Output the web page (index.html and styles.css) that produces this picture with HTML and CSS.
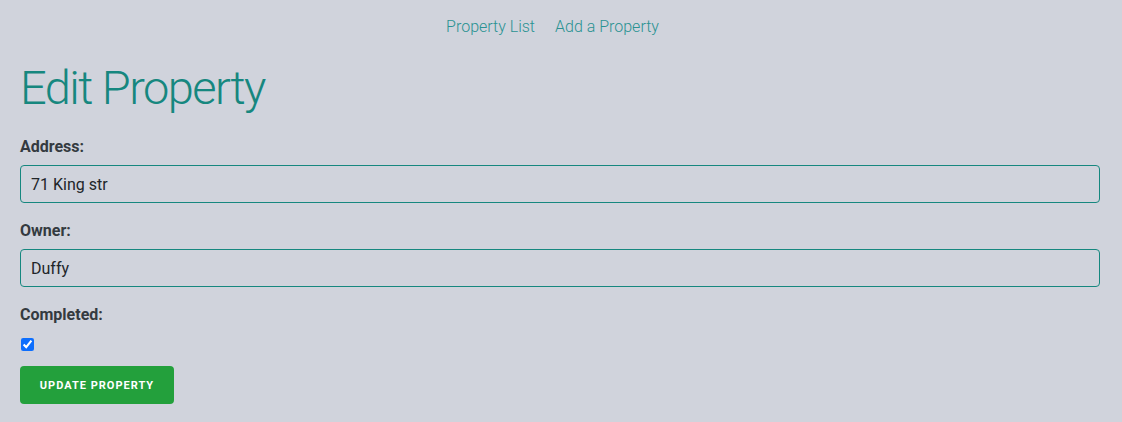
FILE: index.html
```html
<!DOCTYPE html>
<html>
<head>
<meta charset="utf-8">
<link rel="stylesheet" href="styles.css">
</head>
<body>
<nav class="nav">
  <a href="#" class="nav-link">Property List</a>
  <a href="#" class="nav-link">Add a Property</a>
</nav>
<main class="page">
  <h1 class="title">Edit Property</h1>
  <form class="form">
    <div class="field">
      <label class="label">Address:</label>
      <input class="input" type="text" value="71 King str">
    </div>
    <div class="field">
      <label class="label">Owner:</label>
      <input class="input" type="text" value="Duffy">
    </div>
    <div class="field field-check">
      <label class="label">Completed:</label>
      <input class="check" type="checkbox" checked>
    </div>
    <button class="btn" type="button">Update Property</button>
  </form>
</main>
</body>
</html>
```
FILE: styles.css
```css
html, body {
  margin: 0;
  padding: 0;
  background: #d0d3dc;
  font-family: Roboto, "Liberation Sans", sans-serif;
  color: #343a40;
}
.nav {
  display: flex;
  justify-content: center;
  gap: 20px;
  padding-top: 16px;
  padding-right: 17px;
  height: 22px;
  line-height: 22px;
}
.nav-link {
  color: #2a9292;
  text-decoration: none;
  font-size: 16px;
  font-weight: 300;
}
.page {
  padding: 0 22px 0 20px;
}
.title {
  margin: 22px 0 19px 0;
  font-weight: 300;
  font-size: 47px;
  line-height: 56px;
  letter-spacing: -1.55px;
  color: #16877f;
}
.form {
  display: flex;
  flex-direction: column;
}
.field {
  display: flex;
  flex-direction: column;
  margin-bottom: 16px;
}
.field-check {
  margin-bottom: 15px;
}
.label {
  font-weight: 700;
  font-size: 16px;
  line-height: 24px;
  color: #343a40;
  margin-bottom: 6px;
}
.input {
  box-sizing: border-box;
  height: 38px;
  border: 1px solid #16877f;
  border-radius: 4px;
  background: #d0d3dc;
  padding: 0 10px;
  font-family: Roboto, "Liberation Sans", sans-serif;
  font-size: 16px;
  color: #212529;
  outline: none;
}
.check {
  margin: 5px 0 0 1px;
  width: 13px;
  height: 13px;
  accent-color: #0d6efd;
}
.btn {
  align-self: flex-start;
  width: 154px;
  height: 38px;
  margin-top: 0;
  background: #23a03c;
  color: #fff;
  border: none;
  border-radius: 4px;
  font-family: Roboto, "Liberation Sans", sans-serif;
  font-weight: 700;
  font-size: 11px;
  letter-spacing: 1px;
  text-transform: uppercase;
}
```
